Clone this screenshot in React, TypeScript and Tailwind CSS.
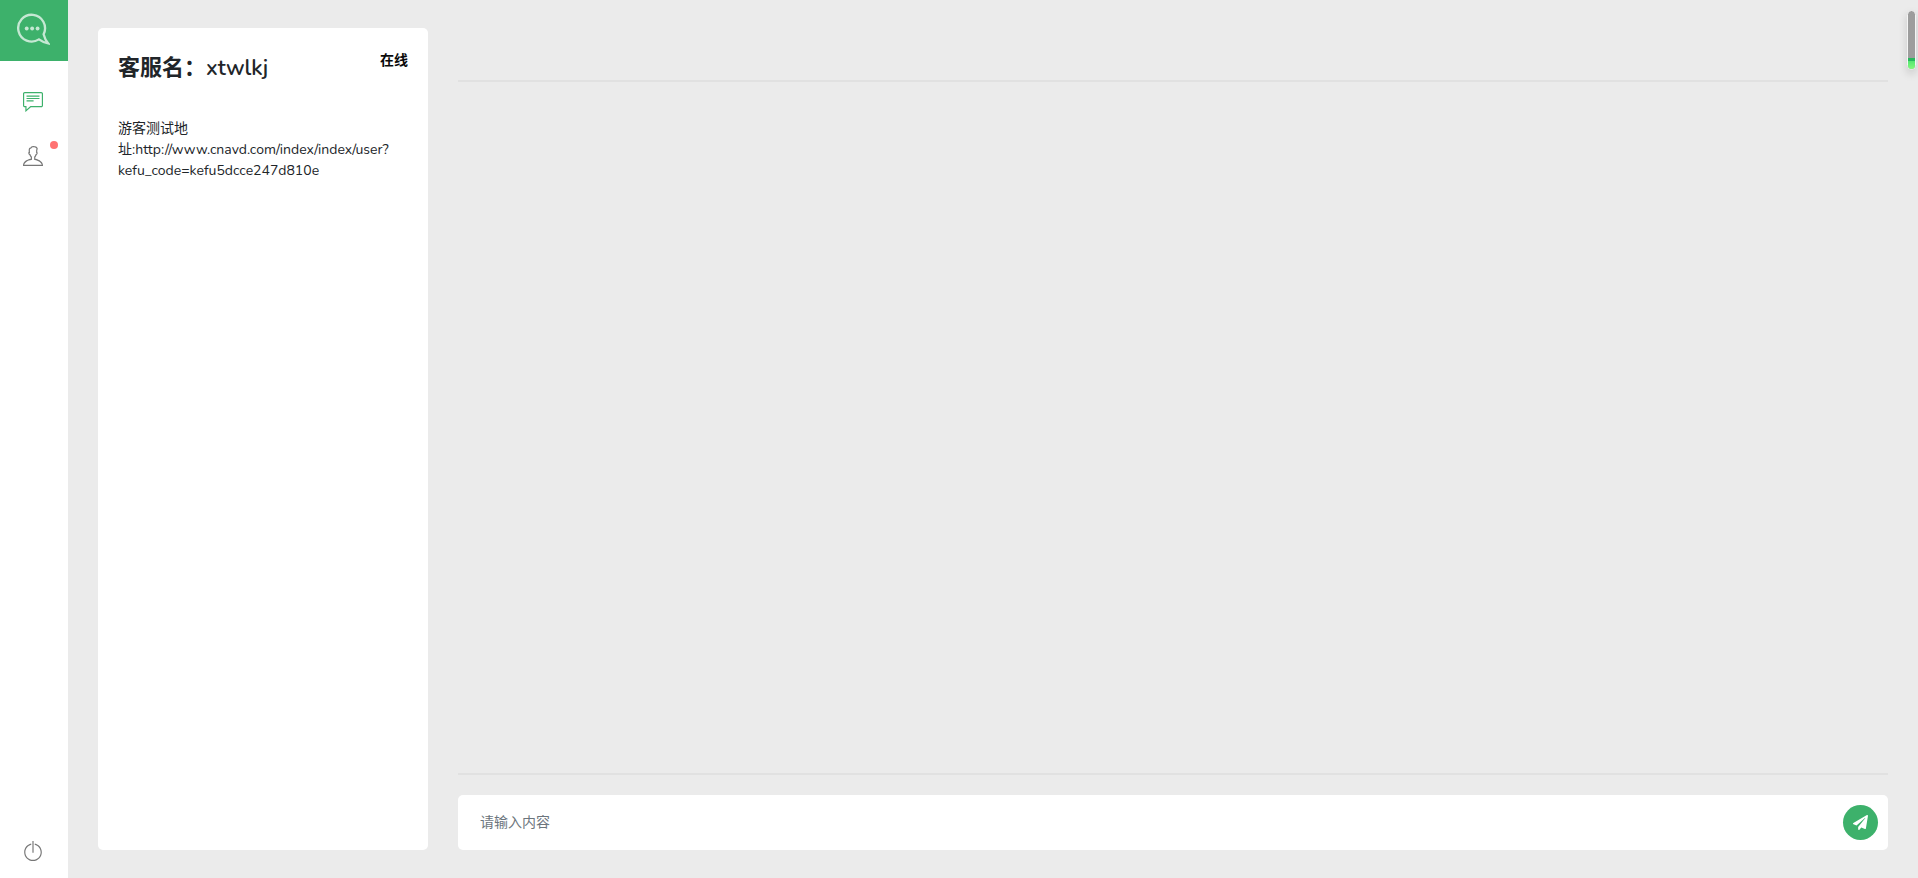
import { FaPaperPlane } from 'react-icons/fa';
import { TfiCommentAlt, TfiPowerOff, TfiUser } from 'react-icons/tfi';

function Logo() {
  return (
    <svg viewBox="0 0 34 34" className="size-[33px]" fill="none" aria-hidden="true">
      <path
        d="M22.6 27.2A13.8 13.8 0 1 1 27.4 21.8C28.4 25.8 29.9 28.8 32.2 31.4C28.6 30.7 25.3 29.2 22.6 27.2Z"
        stroke="#c5e8d3"
        strokeWidth="2.4"
        strokeLinejoin="miter"
      />
      <g fill="#c5e8d3">
        <circle cx="10" cy="16" r="2" />
        <circle cx="15.6" cy="16" r="2" />
        <circle cx="21.2" cy="16" r="2" />
      </g>
    </svg>
  );
}

function Sidebar() {
  return (
    <nav className="flex w-17 shrink-0 flex-col bg-white text-[#777777]">
      <a href="#home" aria-label="首页" className="flex h-[61px] items-center justify-center bg-[#3db16b] pr-0.5 pb-0.5">
        <Logo />
      </a>
      <ul className="flex flex-1 flex-col items-center gap-[34px] pt-[31px] pr-0.5 pb-[17px]">
        <li>
          <a href="#chats" aria-label="会话" className="block text-[#3db16b]">
            <TfiCommentAlt className="size-5" />
          </a>
        </li>
        <li className="relative">
          <a href="#visitors" aria-label="访客" className="block">
            <TfiUser className="size-5" />
          </a>
          <span className="absolute -top-[5px] -right-[15px] size-2 rounded-full bg-[#ff7272]" />
        </li>
        <li className="mt-auto">
          <button type="button" aria-label="退出" className="block">
            <TfiPowerOff className="size-5" />
          </button>
        </li>
      </ul>
    </nav>
  );
}

function VisitorPanel() {
  return (
    <aside className="w-[330px] shrink-0 rounded-[5px] bg-white p-5 text-sm leading-[21px] text-[#212529]">
      <header className="flex items-start justify-between">
        <h1 className="text-[22px] leading-10 font-semibold">客服名：xtwlkj</h1>
        <span className="pt-0.5 font-semibold text-[#0a0a0a]">在线</span>
      </header>
      <p className="pt-[30px]">
        游客测试地址:http://www.cnavd.com/index/index/user?kefu_code=kefu5dcce247d810e
      </p>
    </aside>
  );
}

function ChatPanel() {
  return (
    <section className="flex min-w-0 flex-1 flex-col">
      <header className="h-[54px] border-b-2 border-[#e1e1e1]" />
      <div className="flex-1" />
      <footer className="border-t-2 border-[#e1e1e1] pt-5">
        <form
          className="flex items-center rounded-[5px] bg-white p-2.5 pl-[22px]"
          onSubmit={(event) => event.preventDefault()}
        >
          <input
            type="text"
            aria-label="请输入内容"
            placeholder="请输入内容"
            className="min-w-0 flex-1 text-sm outline-none placeholder:text-[#6c757d]"
          />
          <button
            type="submit"
            aria-label="发送"
            className="flex size-[35px] items-center justify-center rounded-full bg-[#3db16b] text-white"
          >
            <FaPaperPlane className="size-[15px]" />
          </button>
        </form>
      </footer>
    </section>
  );
}

function LevelMeter() {
  return (
    <div className="absolute top-[10px] right-0.5 flex h-[60px] w-[9px] flex-col overflow-hidden rounded-full border border-[#f5f5f5] bg-[#9d9d9d] shadow-[0_4px_8px_rgba(0,0,0,0.15)]">
      <div className="mt-auto h-[11px] border-t-3 border-[#27b85c] bg-linear-to-b from-[#55e472] to-[#83fb7d]" />
    </div>
  );
}

export default function App() {
  return (
    <div className="relative flex h-screen overflow-hidden bg-[#ebebeb] font-['Nunito','Lato','Noto_Sans_CJK_SC',sans-serif]">
      <Sidebar />
      <main className="flex min-w-0 flex-1 gap-[30px] px-[30px] py-7">
        <VisitorPanel />
        <ChatPanel />
      </main>
      <LevelMeter />
    </div>
  );
}
